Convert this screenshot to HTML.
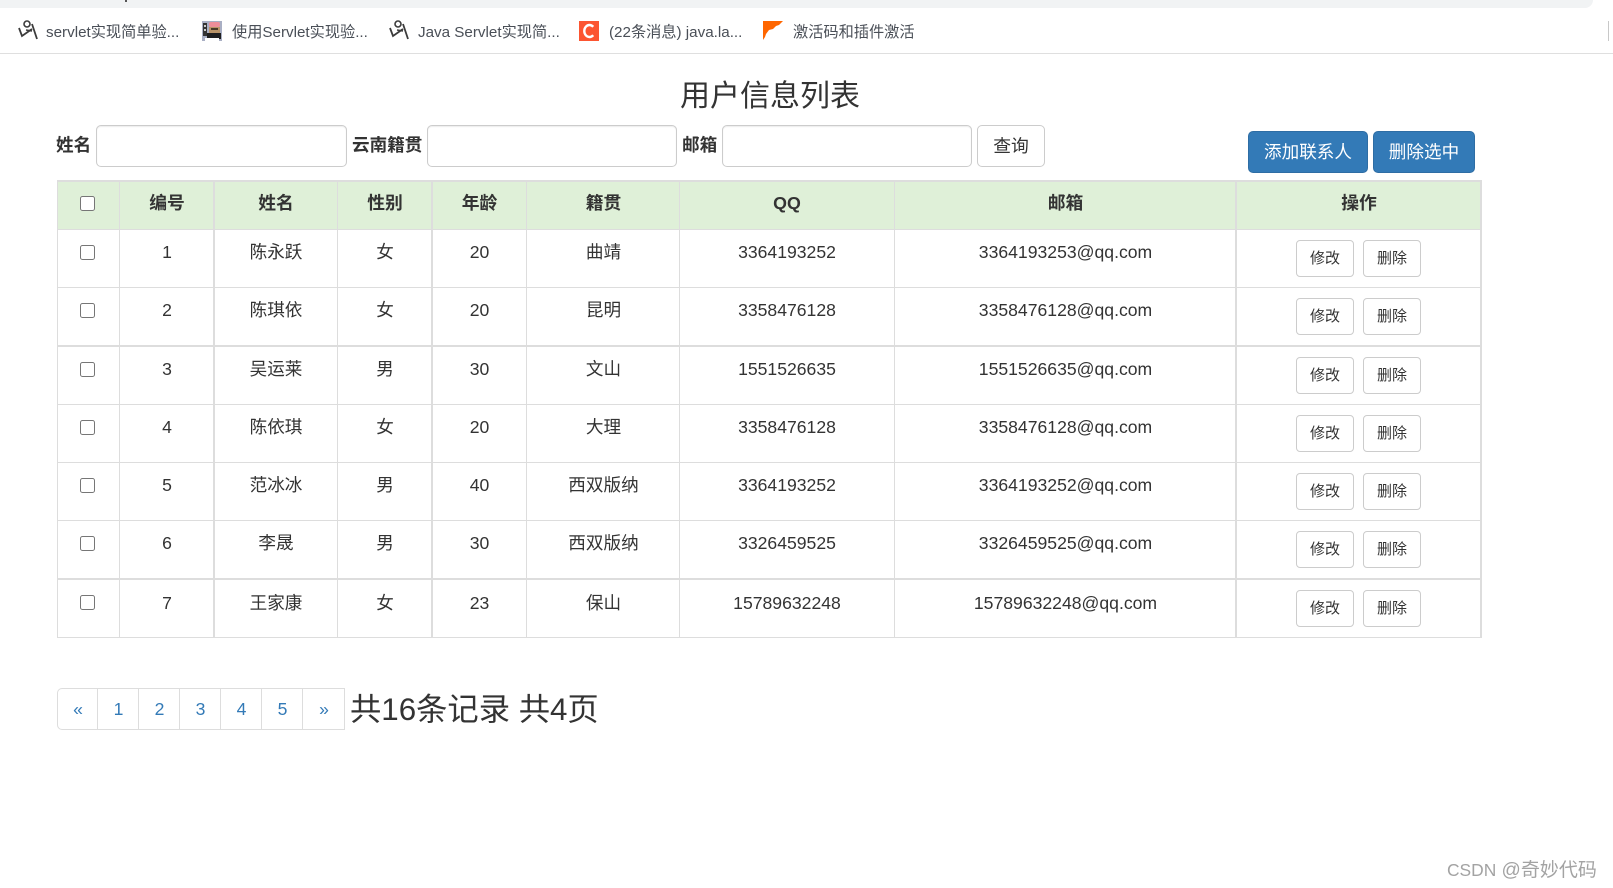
<!DOCTYPE html>
<html lang="zh">
<head>
<meta charset="utf-8">
<title>用户信息列表</title>
<style>
html,body{margin:0;padding:0;background:#fff;width:1613px;height:888px;overflow:hidden}
body{position:relative;font-family:"Liberation Sans","Noto Sans CJK SC",sans-serif;color:#333}
.a{position:absolute}
.bm{position:absolute;top:22px;height:22px;line-height:22px;font-size:15.2px;color:#4a4f57;white-space:nowrap}
.ic{position:absolute}
.lb{position:absolute;top:132px;height:26px;line-height:26px;font-size:17.6px;font-weight:bold;white-space:nowrap}
input.t{position:absolute;top:125px;height:42px;box-sizing:border-box;border:1px solid #ccc;border-radius:5px;background:#fff;box-shadow:inset 0 1px 1px rgba(0,0,0,.075);margin:0;padding:0}
.b{position:absolute;box-sizing:border-box;text-align:center;border-radius:5px;white-space:nowrap;font-family:inherit}
.p{top:131px;height:42px;line-height:40px;background:#337ab7;border:1px solid #2e6da4;color:#fff;font-size:17.6px}
.hg{position:absolute;left:57px;width:1425px;background:#ddd}
.vg{position:absolute;top:180px;height:458px;background:#ddd}
.r{position:absolute;left:0;width:1613px;height:46px;line-height:46px;font-size:17.6px;color:#333}
.r span{position:absolute;top:0;text-align:center;white-space:nowrap}
.c2{left:119.5px;width:95px}.c3{left:215px;width:122px}.c4{left:338px;width:94px}.c5{left:433px;width:93px}
.c6{left:527px;width:153px}.c7{left:680px;width:214px}.c8{left:895px;width:341px}.c9{left:1237px;width:244px}
.h{font-weight:bold;font-size:17.8px}
input.k{position:absolute;left:80px;width:15px;height:15px;margin:0}
.s{height:37px;width:58px;line-height:36px;border:1px solid #ccc;background:#fff;font-size:15px;color:#333;border-radius:4px}
.e{left:1296px}.d{left:1363px}
.pg{position:absolute;top:688px;height:42px;box-sizing:border-box;border:1px solid #ddd;border-left:0;line-height:40px;text-align:center;font-size:17.6px;color:#337ab7;background:#fff;padding-left:1px}
</style>
</head>
<body>
<!-- browser chrome -->
<div class="a" style="left:0;top:0;width:1593px;height:8px;background:#f1f3f4;border-bottom-right-radius:10px"></div>
<div class="a" style="left:125px;top:0;width:2px;height:2px;background:#555"></div>
<div class="a" style="left:0;top:53px;width:1613px;height:1px;background:#dfdfdf"></div>
<div class="a" style="left:1608px;top:21px;width:1px;height:20px;background:#c8c8c8"></div>

<svg class="ic" style="left:12px;top:16px" width="30" height="30" viewBox="0 0 30 30" fill="none" stroke="#3c3c3c"><circle cx="15" cy="8" r="3" stroke-width="1.6"/><path d="M7 12L10 20L20 13" stroke-width="1.8"/><path d="M20 8L25 23" stroke-width="1.8"/><path d="M14 14L20 15" stroke-width="1.4"/></svg>
<div class="bm" style="left:46px">servlet实现简单验...</div>

<svg class="ic" style="left:202px;top:21px" width="20" height="20" viewBox="0 0 20 20"><rect width="20" height="20" fill="#a9afc4"/><rect x="1" y="2" width="4" height="13" fill="#333"/><rect x="2" y="4" width="2" height="2" fill="#ccc"/><rect x="2" y="8" width="2" height="2" fill="#ccc"/><rect x="7" y="1" width="11" height="5" rx="2" fill="#ee8d99"/><rect x="7" y="6" width="11" height="6" fill="#b99367"/><rect x="9" y="7" width="7" height="2" fill="#4a3a2a"/><rect x="5" y="12" width="14" height="6" fill="#1f1f1f"/><rect x="3" y="17" width="14" height="3" fill="#fff"/></svg>
<div class="bm" style="left:232px">使用Servlet实现验...</div>

<svg class="ic" style="left:383px;top:16px" width="30" height="30" viewBox="0 0 30 30" fill="none" stroke="#3c3c3c"><circle cx="15" cy="8" r="3" stroke-width="1.6"/><path d="M7 12L10 20L20 13" stroke-width="1.8"/><path d="M20 8L25 23" stroke-width="1.8"/><path d="M14 14L20 15" stroke-width="1.4"/></svg>
<div class="bm" style="left:418px">Java Servlet实现简...</div>

<svg class="ic" style="left:579px;top:21px" width="20" height="20" viewBox="0 0 20 20"><rect width="20" height="20" fill="#fc5531"/><path d="M14.2 5.8A5.2 6 0 1 0 14.2 14.2" fill="none" stroke="#fff" stroke-width="2.4"/></svg>
<div class="bm" style="left:609px">(22条消息) java.la...</div>

<svg class="ic" style="left:758px;top:16px" width="30" height="30" viewBox="0 0 30 30"><path d="M5 5H25L21 9L18 10L15 13L11 14L8 18L7 21L5 24Z" fill="#ff6600"/></svg>
<div class="bm" style="left:793px">激活码和插件激活</div>

<!-- title -->
<div class="a" style="left:570px;width:400px;top:77px;height:40px;line-height:40px;text-align:center;font-size:30px;color:#333">用户信息列表</div>

<!-- form -->
<div class="lb" style="left:56px">姓名</div>
<input class="t" style="left:96px;width:251px" type="text">
<div class="lb" style="left:352px">云南籍贯</div>
<input class="t" style="left:427px;width:250px" type="text">
<div class="lb" style="left:682px">邮箱</div>
<input class="t" style="left:722px;width:250px" type="text">
<div class="b" style="left:977px;top:125px;width:68px;height:42px;line-height:40px;border:1px solid #ccc;background:#fff;font-size:17.8px;color:#333">查询</div>
<div class="b p" style="left:1248px;width:120px">添加联系人</div>
<div class="b p" style="left:1373px;width:102px">删除选中</div>

<!-- table -->
<div class="a" style="left:57px;top:180px;width:1425px;height:49px;background:#dff0d8"></div>
<div class="hg" style="top:180px;height:2px"></div>
<div class="hg" style="top:229px;height:1px"></div>
<div class="hg" style="top:287px;height:1px"></div>
<div class="hg" style="top:345px;height:2px"></div>
<div class="hg" style="top:404px;height:1px"></div>
<div class="hg" style="top:462px;height:1px"></div>
<div class="hg" style="top:520px;height:1px"></div>
<div class="hg" style="top:578px;height:2px"></div>
<div class="hg" style="top:637px;height:1px"></div>
<div class="vg" style="left:57px;width:1px"></div>
<div class="vg" style="left:119px;width:1px"></div>
<div class="vg" style="left:213px;width:2px"></div>
<div class="vg" style="left:337px;width:1px"></div>
<div class="vg" style="left:431px;width:2px"></div>
<div class="vg" style="left:526px;width:1px"></div>
<div class="vg" style="left:679px;width:1px"></div>
<div class="vg" style="left:894px;width:1px"></div>
<div class="vg" style="left:1235px;width:2px"></div>
<div class="vg" style="left:1480px;width:2px"></div>

<input class="k" style="top:196px" type="checkbox">
<div class="r h" style="top:180px"><span class="c2">编号</span><span class="c3">姓名</span><span class="c4">性别</span><span class="c5">年龄</span><span class="c6">籍贯</span><span class="c7">QQ</span><span class="c8">邮箱</span><span class="c9">操作</span></div>

<input class="k" style="top:245px" type="checkbox">
<div class="r" style="top:229px"><span class="c2">1</span><span class="c3">陈永跃</span><span class="c4">女</span><span class="c5">20</span><span class="c6">曲靖</span><span class="c7">3364193252</span><span class="c8">3364193253@qq.com</span></div>
<div class="b s e" style="top:240px">修改</div><div class="b s d" style="top:240px">删除</div>

<input class="k" style="top:303px" type="checkbox">
<div class="r" style="top:287px"><span class="c2">2</span><span class="c3">陈琪依</span><span class="c4">女</span><span class="c5">20</span><span class="c6">昆明</span><span class="c7">3358476128</span><span class="c8">3358476128@qq.com</span></div>
<div class="b s e" style="top:298px">修改</div><div class="b s d" style="top:298px">删除</div>

<input class="k" style="top:362px" type="checkbox">
<div class="r" style="top:346px"><span class="c2">3</span><span class="c3">吴运莱</span><span class="c4">男</span><span class="c5">30</span><span class="c6">文山</span><span class="c7">1551526635</span><span class="c8">1551526635@qq.com</span></div>
<div class="b s e" style="top:357px">修改</div><div class="b s d" style="top:357px">删除</div>

<input class="k" style="top:420px" type="checkbox">
<div class="r" style="top:404px"><span class="c2">4</span><span class="c3">陈依琪</span><span class="c4">女</span><span class="c5">20</span><span class="c6">大理</span><span class="c7">3358476128</span><span class="c8">3358476128@qq.com</span></div>
<div class="b s e" style="top:415px">修改</div><div class="b s d" style="top:415px">删除</div>

<input class="k" style="top:478px" type="checkbox">
<div class="r" style="top:462px"><span class="c2">5</span><span class="c3">范冰冰</span><span class="c4">男</span><span class="c5">40</span><span class="c6">西双版纳</span><span class="c7">3364193252</span><span class="c8">3364193252@qq.com</span></div>
<div class="b s e" style="top:473px">修改</div><div class="b s d" style="top:473px">删除</div>

<input class="k" style="top:536px" type="checkbox">
<div class="r" style="top:520px"><span class="c2">6</span><span class="c3">李晟</span><span class="c4">男</span><span class="c5">30</span><span class="c6">西双版纳</span><span class="c7">3326459525</span><span class="c8">3326459525@qq.com</span></div>
<div class="b s e" style="top:531px">修改</div><div class="b s d" style="top:531px">删除</div>

<input class="k" style="top:595px" type="checkbox">
<div class="r" style="top:580px"><span class="c2">7</span><span class="c3">王家康</span><span class="c4">女</span><span class="c5">23</span><span class="c6">保山</span><span class="c7">15789632248</span><span class="c8">15789632248@qq.com</span></div>
<div class="b s e" style="top:590px">修改</div><div class="b s d" style="top:590px">删除</div>

<!-- pagination -->
<div class="pg" style="left:57px;width:41px;border-left:1px solid #ddd;border-radius:5px 0 0 5px">«</div>
<div class="pg" style="left:98px;width:41px">1</div>
<div class="pg" style="left:139px;width:41px">2</div>
<div class="pg" style="left:180px;width:41px">3</div>
<div class="pg" style="left:221px;width:41px">4</div>
<div class="pg" style="left:262px;width:41px">5</div>
<div class="pg" style="left:303px;width:42px">»</div>
<div class="a" style="left:350px;top:690px;height:40px;line-height:40px;font-size:31.3px;color:#333;white-space:nowrap">共16条记录 共4页</div>

<!-- watermark -->
<div class="a" style="left:1447px;top:857px;height:26px;line-height:26px;font-size:19px;color:#a3a3a3;white-space:nowrap"><span style="font-size:17.4px">CSDN</span> @奇妙代码</div>
</body>
</html>
